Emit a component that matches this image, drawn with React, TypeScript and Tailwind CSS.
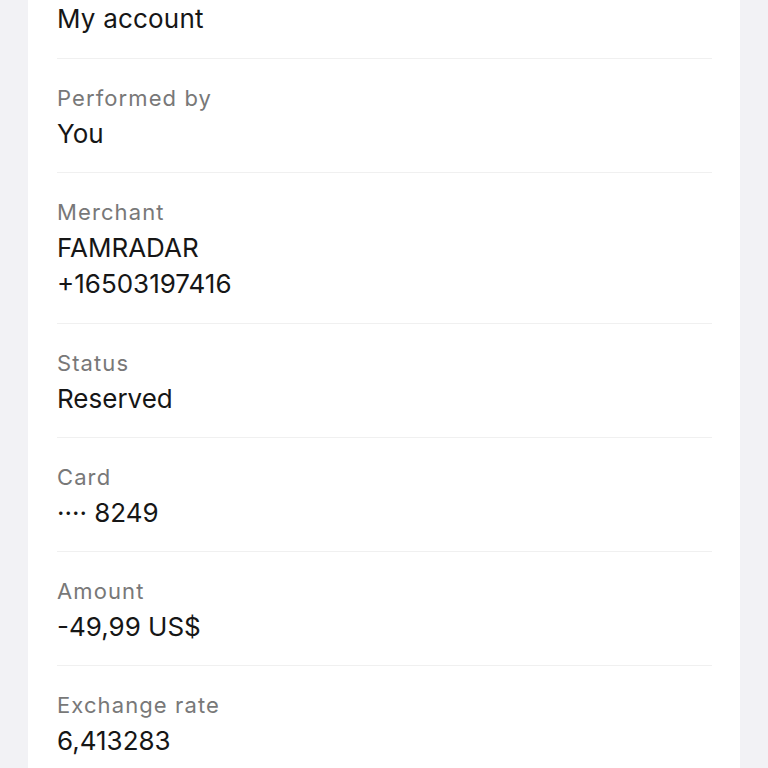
import React from "react";

const rows: { label: string; values: string[] }[] = [
  { label: "Performed by", values: ["You"] },
  { label: "Merchant", values: ["FAMRADAR", "+16503197416"] },
  { label: "Status", values: ["Reserved"] },
  { label: "Card", values: ["···· 8249"] },
  { label: "Amount", values: ["-49,99 US$"] },
  { label: "Exchange rate", values: ["6,413283"] },
];

export default function App() {
  return (
    <div
      className="w-[768px] h-[768px] overflow-hidden bg-[#f2f2f5] px-[28px]"
      style={{ fontFamily: "Inter, 'Liberation Sans', sans-serif" }}
    >
      <div className="h-full bg-white pl-[29px] pr-[28px]">
        <div className="pt-[1px] pb-[21px] border-b border-[#f0f0f0]">
          <div className="text-[26px] leading-[36px] text-[#161616] tracking-[0.2px]">My account</div>
        </div>
        {rows.map((r) => (
          <div
            key={r.label}
            className={
              r.values.length > 1
                ? "pt-[21px] pb-[21px] border-b border-[#f0f0f0]"
                : "pt-[21px] pb-[20px] border-b border-[#f0f0f0]"
            }
          >
            <div className="text-[22px] leading-[36px] text-[#787878] tracking-[1.1px]">{r.label}</div>
            {r.values.map((v) => (
              <div key={v} className="text-[26px] leading-[36px] text-[#161616]">
                {v}
              </div>
            ))}
          </div>
        ))}
      </div>
    </div>
  );
}
